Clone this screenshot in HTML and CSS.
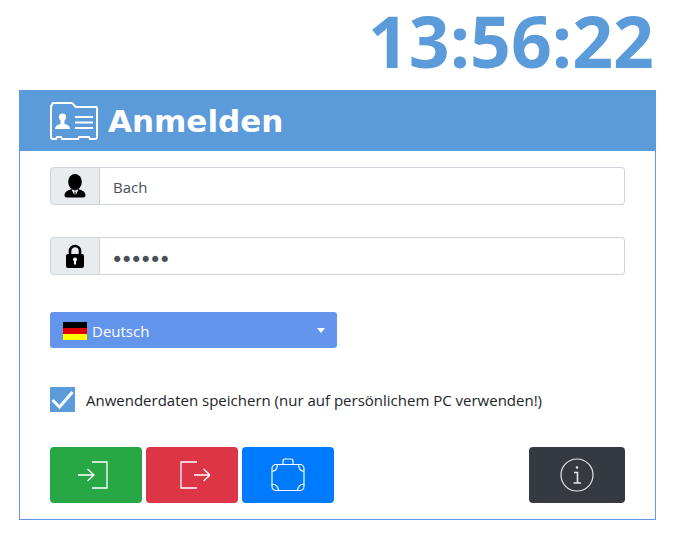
FILE: index.html
```html
<!DOCTYPE html>
<html lang="en">
<head>
    <meta charset="UTF-8">
    <meta name="viewport" content="width=device-width, initial-scale=1.0">
    <title>Anmelden</title>
    <link rel="stylesheet" href="styles.css">
</head>
<body>
    <div class="clock">13:56:22</div>

    <div class="card">
        <div class="card-header">
            <svg class="header-icon" width="48" height="38" viewBox="0 0 48 38" fill="none" stroke="#fff" stroke-width="2" stroke-linejoin="round">
                <path d="M2 3 Q2 1 4 1 H21 Q23 1 24 3 Q25 5 27 5 H46 Q47 5 47 7 V35 Q47 37 45 37 H40 L39 35 H29 L28 37 H12 L11 35 H7 L6 37 H3 Q1 37 1 35 V4 Z"/>
                <path d="M25 15 H43 M25 20.5 H43 M25 26 H43"/>
                <circle cx="12.5" cy="15" r="3.6" fill="#fff" stroke="none"/>
                <path d="M5 27 Q5 23 10.5 22 V18 H14.5 V22 Q20 23 20 27 Z" fill="#fff" stroke="none"/>
            </svg>
            <h1>Anmelden</h1>
        </div>

        <div class="card-body">
            <div class="input-group">
                <span class="addon">
                    <svg width="22" height="24" viewBox="0 0 22 24">
                        <ellipse cx="11" cy="8" rx="6.8" ry="8" fill="#000"/>
                        <path d="M0.5 21 Q0.5 17 7.5 15 L11 16 L14.5 15 Q21.5 17 21.5 21 Q21.5 23.5 19 23.5 H3 Q0.5 23.5 0.5 21 Z" fill="#000"/>
                        <path d="M7.5 15.5 L10.2 21 L10.6 17.5 H11.4 L11.8 21 L14.5 15.5 L11 16.5 Z" fill="#e9ecef"/>
                    </svg>
                </span>
                <input class="field" type="text" value="Bach">
            </div>

            <div class="input-group">
                <span class="addon">
                    <svg width="20" height="25" viewBox="0 0 20 25">
                        <path d="M5 11 V7 A5 5 0 0 1 15 7 V11" fill="none" stroke="#000" stroke-width="2.6"/>
                        <rect x="1" y="10" width="18" height="14" rx="2" fill="#000"/>
                        <circle cx="10" cy="15.5" r="2" fill="#fff"/>
                        <rect x="9" y="16" width="2" height="4.5" fill="#fff"/>
                    </svg>
                </span>
                <input class="field secret" type="password" value="secret">
            </div>

            <button class="lang-select" type="button">
                <span class="flag"><i class="black"></i><i class="red"></i><i class="gold"></i></span>
                <span class="lang-name">Deutsch</span>
                <span class="caret"></span>
            </button>

            <label class="remember">
                <span class="checkbox">
                    <svg width="25" height="25" viewBox="0 0 25 25">
                        <path d="M2.5 13 L9.5 20 L22.5 5" fill="none" stroke="#fff" stroke-width="3"/>
                    </svg>
                </span>
                Anwenderdaten speichern (nur auf persönlichem PC verwenden!)
            </label>

            <div class="actions">
                <button class="btn green" type="button">
                    <svg class="icon-in" width="30" height="28" viewBox="0 0 30 28" fill="none" stroke="#fff" stroke-width="1.3">
                        <path d="M14 1 H29 V27 H14"/>
                        <path d="M0 14 H16 M9.5 8 L16 14 L9.5 20"/>
                    </svg>
                </button>
                <button class="btn red" type="button">
                    <svg class="icon-out" width="30" height="28" viewBox="0 0 30 28" fill="none" stroke="#fff" stroke-width="1.3">
                        <path d="M17 1 H1 V27 H17"/>
                        <path d="M14 14 H30 M23.5 8 L30 14 L23.5 20"/>
                    </svg>
                </button>
                <button class="btn blue" type="button">
                    <svg width="34" height="34" viewBox="0 0 34 34" fill="none" stroke="#fff" stroke-width="1.2">
                        <rect x="1" y="6.5" width="32" height="26" rx="4"/>
                        <path d="M12 6.5 V3 Q12 1 14 1 H20 Q22 1 22 3 V6.5"/>
                        <path d="M6.5 6.5 Q6.5 12.5 1 13.5 M27.5 6.5 Q27.5 12.5 33 13.5 M1 26 Q7 26.5 7.5 32.5 M33 26 Q27 26.5 26.5 32.5"/>
                    </svg>
                </button>
                <button class="btn dark" type="button">
                    <svg width="34" height="34" viewBox="0 0 34 34" fill="none" stroke="#e6e6e6" stroke-width="1.2">
                        <circle cx="17" cy="17" r="16"/>
                        <circle cx="17" cy="9.5" r="1.3" fill="#e6e6e6" stroke="none"/>
                        <path d="M14 14.5 H17.5 V25 M13.5 25 H21" stroke-width="1.6"/>
                    </svg>
                </button>
            </div>
        </div>
    </div>
</body>
</html>
```

FILE: styles.css
```css
* { box-sizing: border-box; }
body { margin: 0; padding: 0 21px 18px 19px; font-family: "Open Sans", "Noto Sans", sans-serif; font-size: 15px; color: #212529; background: #fff; }

.clock { height: 90px; padding: 0 2px 0 0; text-align: right; font-size: 71.5px; font-weight: 700; line-height: 81px; color: #5b9bd9; }

.card { height: 430px; border: 1px solid #6495ed; border-top: none; }
.card-header { display: flex; align-items: center; height: 61px; margin: 0 -1px; padding-left: 31px; background: #5b9bd9; color: #fff; }
.header-icon { margin-right: 10px; }
.card-header h1 { margin: 0; font-family: "DejaVu Sans", sans-serif; font-size: 31px; font-weight: 700; }

.card-body { display: flex; flex-direction: column; padding: 16px 30px 0 30px; }

.input-group { display: flex; height: 38px; margin-bottom: 32px; }
.addon { display: flex; align-items: center; justify-content: center; width: 50px; background: #e9ecef; border: 1px solid #ced4da; border-radius: 4px 0 0 4px; }
.field { flex: 1; min-width: 0; padding: 7px 12px 5px 13px; border: 1px solid #ced4da; border-left: none; border-radius: 0 4px 4px 0; font-family: inherit; font-size: 15px; color: #495057; }
.secret { font-family: "DejaVu Sans", sans-serif; font-size: 21px; letter-spacing: -2.9px; padding: 7px 12px 0 11px; }

.lang-select { display: flex; align-items: center; width: 287px; height: 36px; margin: 5px 0 39px 0; padding: 2px 12px 0 13px; background: #6495ed; color: #fff; border: none; border-radius: 3px; font-family: inherit; font-size: 15px; }
.flag { display: flex; flex-direction: column; width: 24px; height: 18px; margin-right: 5px; }
.flag i { flex: 1; }
.flag .black { background: #000; }
.flag .red { background: #e00000; }
.flag .gold { background: #ffff00; }
.lang-name { flex: 1; text-align: left; }
.caret { border-top: 5px solid #fff; border-left: 4.5px solid transparent; border-right: 4.5px solid transparent; margin-bottom: 2px; }

.remember { display: flex; align-items: center; height: 25px; margin-bottom: 35px; font-size: 15px; }
.checkbox { display: block; width: 25px; height: 25px; margin-right: 11px; background: #5b9bd9; }

.actions { display: flex; gap: 4px; }
.btn { display: flex; align-items: center; justify-content: center; width: 92px; height: 56px; padding: 0; border: none; border-radius: 4px; }
.icon-in { margin-right: 6px; }
.icon-out { margin-left: 6px; }
.green { background: #28a745; }
.red { background: #dc3545; }
.blue { background: #007bff; }
.dark { width: 96px; margin-left: auto; background: #343a40; }
```
